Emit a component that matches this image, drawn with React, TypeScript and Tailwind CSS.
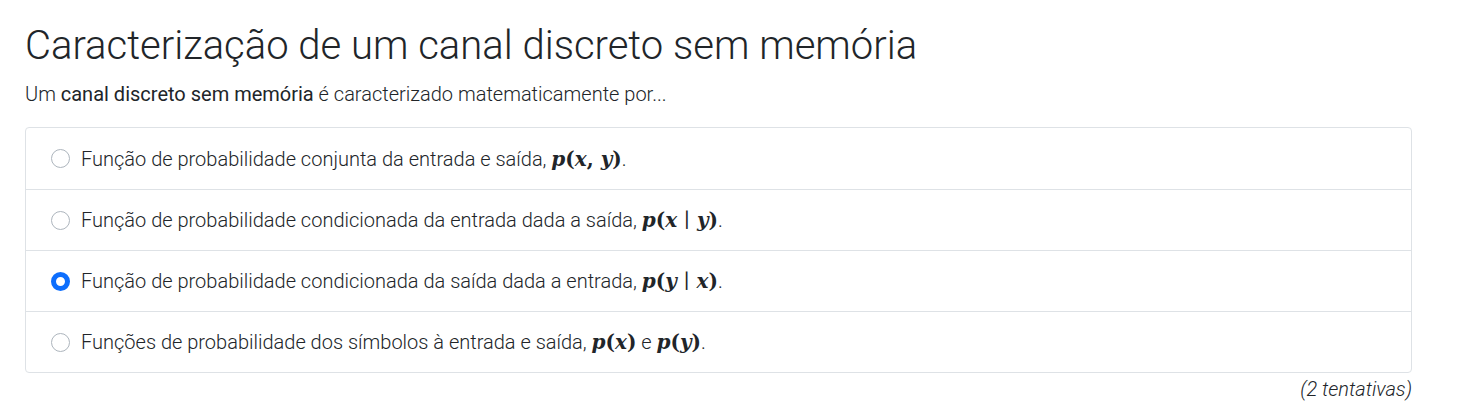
import React from "react";

// math fragment in bold italic, parens upright
function M({ children }: { children: React.ReactNode }) {
    return (
        <span className="font-['DejaVu_Serif',serif] text-[20px] font-bold leading-none">
            {children}
        </span>
    );
}

function V({ c }: { c: string }) {
    return <i>{c}</i>;
}

const options: { key: string; checked?: boolean; body: React.ReactNode }[] = [
    {
        key: "a",
        body: (
            <>
                Função de probabilidade conjunta da entrada e saída,{" "}
                <M>
                    <V c="p" />(<V c="x" />, <V c="y" />)
                </M>
                .
            </>
        ),
    },
    {
        key: "b",
        body: (
            <>
                Função de probabilidade condicionada da entrada dada a saída,{" "}
                <M>
                    <V c="p" />(<V c="x" /> <span className="font-normal">∣</span> <V c="y" />)
                </M>
                .
            </>
        ),
    },
    {
        key: "c",
        checked: true,
        body: (
            <>
                Função de probabilidade condicionada da saída dada a entrada,{" "}
                <M>
                    <V c="p" />(<V c="y" /> <span className="font-normal">∣</span> <V c="x" />)
                </M>
                .
            </>
        ),
    },
    {
        key: "d",
        body: (
            <>
                Funções de probabilidade dos símbolos à entrada e saída,{" "}
                <M>
                    <V c="p" />(<V c="x" />)
                </M>{" "}
                e{" "}
                <M>
                    <V c="p" />(<V c="y" />)
                </M>
                .
            </>
        ),
    },
];

export default function App() {
    return (
        <div className="min-h-[409px] bg-white px-[25px] font-['Roboto',sans-serif] text-[#212529]">
            <h1 className="pt-[20px] text-[40px] font-light leading-[52px]">
                Caracterização de um canal discreto sem memória
            </h1>
            <p className="mt-[8px] text-[20px] font-light leading-[28px]">
                Um <strong className="font-normal">canal discreto sem memória</strong> é caracterizado matematicamente por...
            </p>

            {/* answer list */}
            <div className="mt-[19px] w-[1387px] rounded-[4px] border border-[#dee2e6]">
                {options.map((o, i) => (
                    <label
                        key={o.key}
                        className={
                            "flex h-[61px] items-center gap-[11px] px-[25px] text-[20px] font-light " +
                            (i > 0 ? "border-t border-[#dee2e6]" : "")
                        }
                    >
                        <span
                            className={
                                o.checked
                                    ? "h-[19px] w-[19px] shrink-0 rounded-full border-[5px] border-[#0d6efd] bg-white"
                                    : "h-[19px] w-[19px] shrink-0 rounded-full border border-[#adb5bd] bg-white"
                            }
                        />
                        <span>{o.body}</span>
                    </label>
                ))}
            </div>
            <div className="w-[1387px] pt-[2px] text-right text-[20px] font-light italic leading-[28px] text-[#212529]">
                (2 tentativas)
            </div>
        </div>
    );
}
